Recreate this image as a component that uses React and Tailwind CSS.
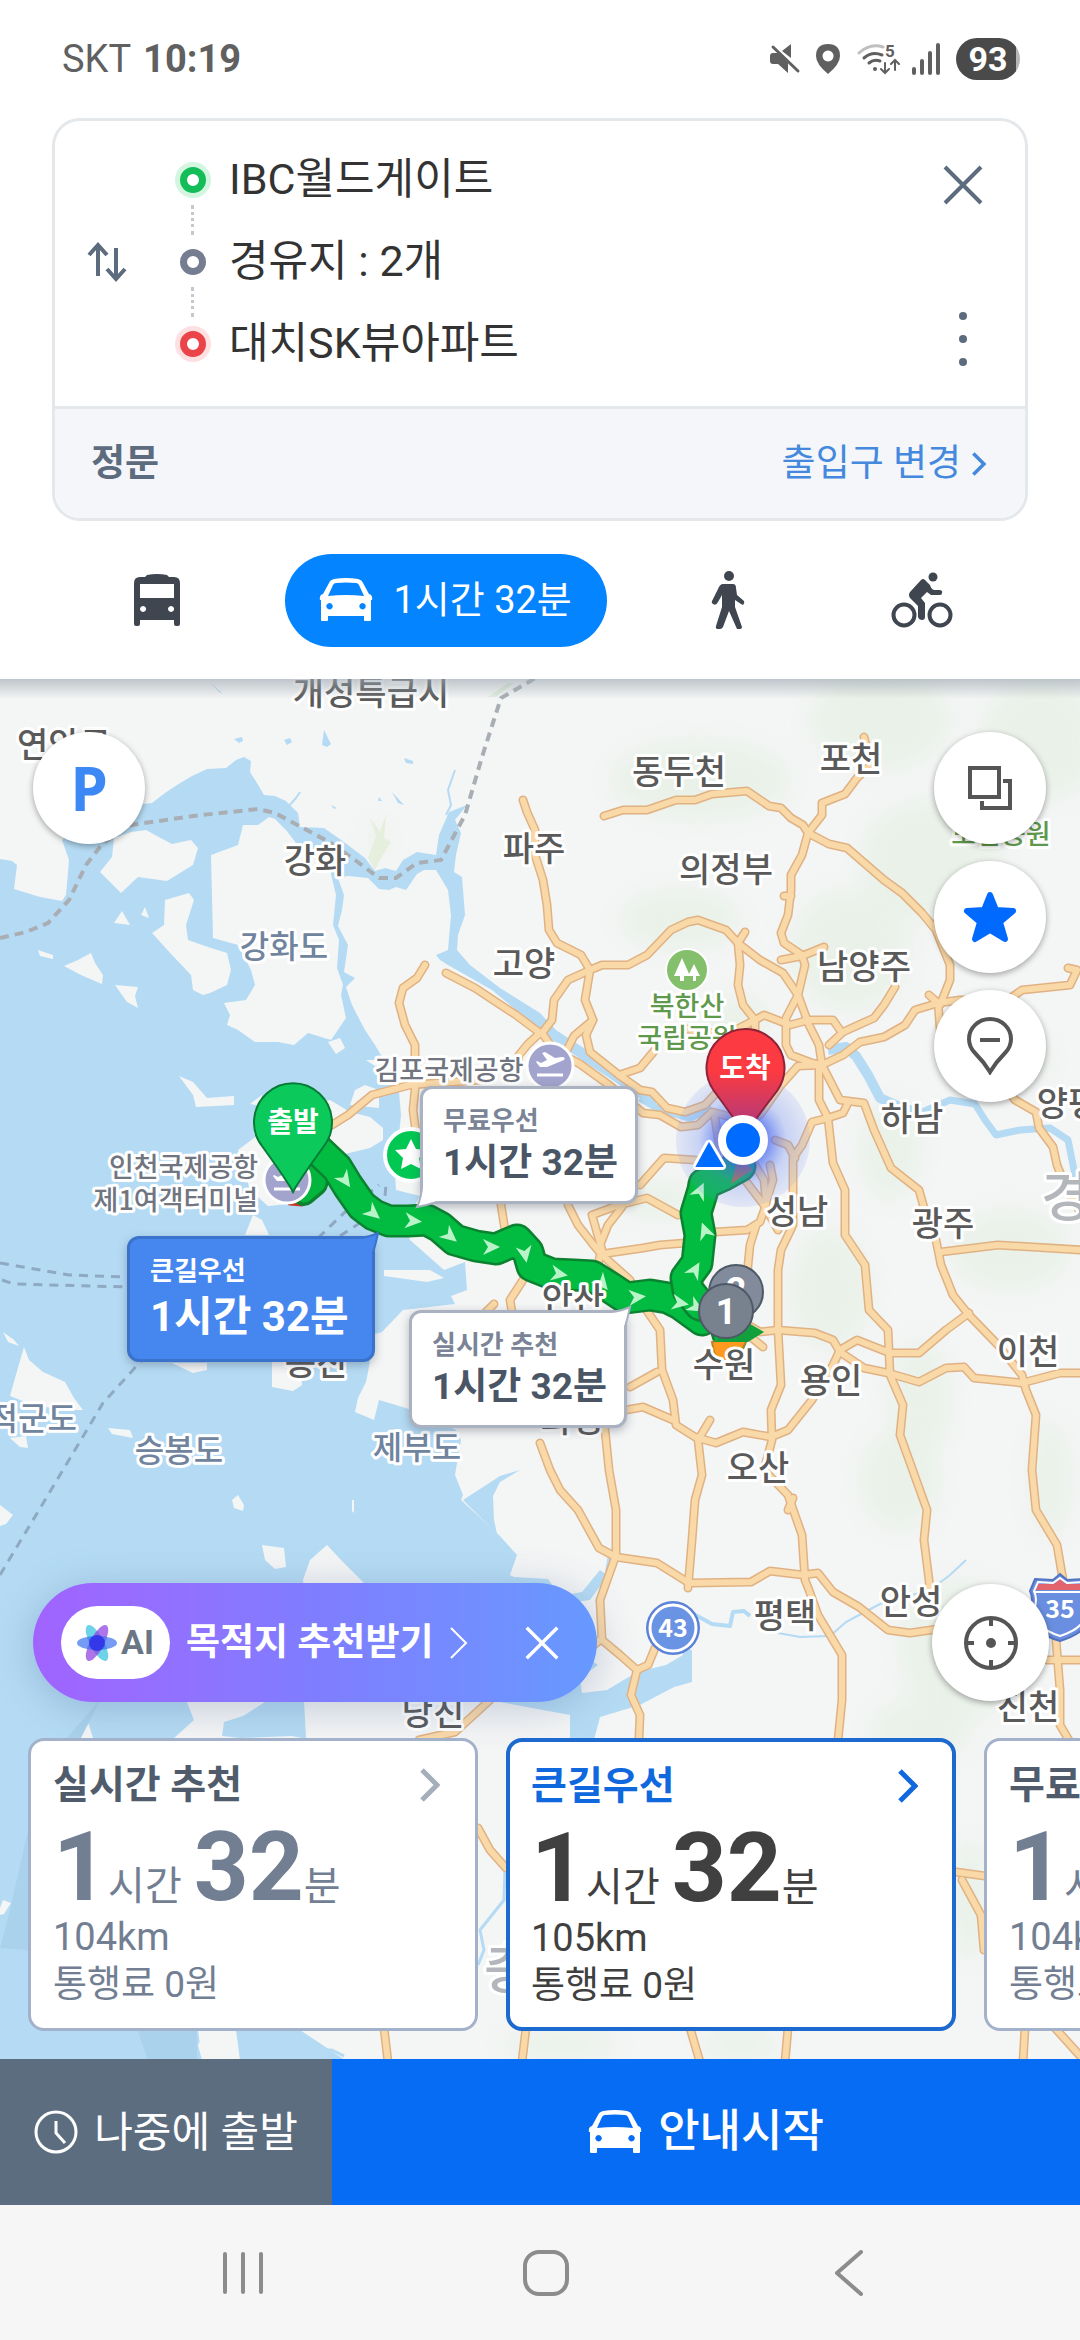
import React from 'react';
import { clsx } from 'clsx';

const WATER = '#b5dbf4';
const LAND = '#f4f5f5';

const sea =
  'M0 859L12 861L17 865L14 889L40 897L62 901L66 895L69 860L62 840L90 810L152 803L165 793L177 785L192 776L207 769L226 768L236 760L244 757L251 761L250 772L257 783L264 795L275 796L286 801L298 813L300 827L324 828L344 842L365 858L375 871L385 868L396 871L403 860L417 852L436 855L439 835L449 812L467 805L455 820L461 833L456 855L454 872L462 877L465 915L458 935L457 950L470 965L500 988L540 1013L556 1030L590 1052L628 1082L657 1098L655 1108L600 1072L552 1040L492 990L448 965L440 960L436 955L448 950L451 915L448 890L436 870L424 870L417 874L406 890L396 887L389 890L379 889L368 878L348 876L338 878L344 895L342 910L338 926L348 945L344 972L355 978L346 987L352 1005L365 1030L375 1045L384 1060L366 1060L384 1072L399 1092L401 1115L399 1135L393 1145L396 1190L420 1196L404 1225L410 1240L444 1270L465 1262L467 1290L451 1296L455 1304L403 1310L382 1332L375 1334L368 1372L366 1382L358 1398L355 1412L374 1420L379 1400L406 1408L456 1430L461 1440L455 1475L463 1495L461 1500L499 1535L517 1555L510 1575L514 1577L548 1579L560 1596L582 1592L600 1570L608 1576L590 1600L560 1604L560 1640L598 1665L580 1678L582 1693L607 1690L637 1672L666 1665L683 1655L683 1648L692 1650L692 1682L674 1687L640 1705L600 1717L594 1740L570 1740L570 1715L500 1702L420 1640L361 1580L341 1560L327 1545L310 1560L303 1580L310 1640L304 1700L306 1738L302 1738L292 1736L240 1738L222 1736L224 1722L243 1716L268 1700L186 1700L194 1720L174 1738L93 1738L86 1715L103 1705L60 1760L40 1900L140 2030L198 2030L202 2060L0 2060Z';

const deepSea = 'M100 1700L65 1740L28 1830L10 1910L0 1948L28 1950L60 1960L138 2032L148 2060L197 2060L197 2032L60 1960L60 1780Z';

const islands = [
  '146,830 155,835 172,844 191,840 198,848 193,865 167,881 138,877 121,893 100,872 112,857 114,838 131,832',
  '243,825 258,825 269,817 275,819 286,830 296,843 310,848 331,860 331,874 336,895 333,925 339,940 337,968 343,985 341,995 346,1018 331,1040 308,1033 294,1045 278,1042 255,1042 238,1030 227,1025 230,1015 224,1003 246,1000 255,985 251,970 238,945 213,938 211,855 238,845',
  '165,900 189,893 194,900 186,925 188,940 205,946 227,953 231,970 227,985 210,993 203,995 193,990 191,975 172,955 152,933 164,925',
  '122,911 130,925 114,923',
  '145,907 149,918 141,915',
  '64,966 78,960 91,953 95,963 103,975 102,984 81,975',
  '115,985 138,987 135,996 138,1008 127,1002',
  '38,950 53,955 53,959 40,956',
  '179,1076 193,1082 207,1098 234,1096 234,1105 196,1107 193,1095',
  '238,1150 258,1135 280,1116 330,1100 350,1112 370,1117 383,1128 383,1140 370,1148 345,1154 330,1170 325,1190 310,1202 268,1206 250,1190',
  '355,1090 365,1085 379,1090 379,1108 350,1105',
  '250,1104 262,1095 262,1106',
  '328,1042 340,1038 345,1048 336,1054',
  '253,1215 262,1220 269,1235 245,1235',
  '384,1270 430,1270 444,1278 427,1282 384,1276',
  '24,1347 29,1360 43,1372 65,1382 74,1398 83,1410 60,1410 28,1403 10,1396 15,1378',
  '3,1332 14,1340 19,1346 8,1342',
  '272,1362 300,1362 302,1385 293,1391 272,1387',
  '172,1363 207,1363 207,1370 193,1373',
  '10,1438 26,1436 28,1448 20,1447',
  '108,1428 130,1430 133,1438 112,1434',
  '232,1500 238,1495 244,1505 243,1511 234,1508',
  '352,1500 354,1500 354,1513 352,1511',
  '262,1545 284,1548 286,1567 275,1569 265,1560',
  '0,1505 13,1515 6,1524 0,1526',
  '229,2032 237,2050 236,2060 202,2060 198,2045 205,2032',
  '3,1900 11,1903 4,1914 0,1915 0,1908',
];

const forests = [
  [700, 780, 90, 40], [880, 720, 70, 50], [1040, 740, 60, 60], [930, 860, 70, 60], [680, 920, 60, 30],
  [850, 950, 60, 60], [1000, 1060, 50, 30], [740, 1020, 30, 25], [660, 1200, 40, 18], [890, 1150, 30, 50],
  [830, 1290, 40, 60], [1010, 1250, 60, 40], [920, 1400, 30, 60], [900, 1480, 40, 50], [960, 1650, 60, 70],
  [920, 1730, 50, 30], [1050, 1480, 20, 60], [265, 905, 20, 8], [270, 1020, 18, 7], [280, 945, 14, 6],
  [375, 840, 10, 14], [200, 955, 14, 6], [560, 2045, 60, 14], [740, 2045, 40, 14], [970, 1900, 20, 60],
];

const roads = [
  '604,816 623,810 647,810 676,800 695,800 712,794 747,791 769,806 781,808 791,818 803,825 808,833 829,844 847,848 884,880 902,893 922,913 936,930 950,965 950,980 940,1005',
  '864,737 871,765 857,778 845,794 822,803 822,815 808,833 802,855 791,875 791,890 788,915 781,933 784,943 802,955 805,965 798,995 786,1018 786,1045 791,1055 812,1063 822,1065',
  '784,896 791,896',
  '781,960 802,956 824,947',
  '590,970 602,965 628,965 647,955 671,930 688,922 698,920 726,930 738,943 740,965 738,985 743,1005 755,1020 755,1045',
  '745,932 738,943 760,960 783,973 798,995 809,1025 819,1045 822,1065 840,1100 864,1103 874,1130 891,1168 919,1190 926,1215 936,1240 941,1265 953,1295 969,1315 998,1345 1022,1375 1026,1390 1036,1415 1032,1470 1036,1510 1057,1545 1063,1580 1056,1640 1060,1690 1060,1725 1070,1742',
  '523,800 527,812 535,830 535,855 543,880 547,905 549,930 557,943 581,955 590,970 585,1000 593,1020 586,1035 590,1052 619,1075 640,1090 652,1092 667,1108 685,1112 705,1105 719,1090 726,1070',
  '590,970 568,980 554,1000 552,1020 542,1033 554,1050 580,1064 609,1085 643,1113 660,1115 681,1127 698,1125 712,1112 735,1118 760,1115 781,1085 798,1066 822,1065',
  '593,1020 574,1036 566,1052',
  '619,1075 640,1068 655,1050',
  '680,1028 726,1035 755,1020 764,1015 790,1025 809,1020 833,1020 840,1030',
  '895,987 884,1005 874,1018 843,1032 829,1045',
  '822,1065 843,1055 860,1042 884,1037 905,1025 915,1010 938,1003 960,1000 1005,1002 1022,990 1070,985 1077,970 1068,968',
  '929,995 938,1003 941,1040 1000,1080 1015,1100 1036,1112 1039,1128 1053,1147 1057,1165 1067,1190 1082,1215',
  '819,1066 819,1100 828,1118 833,1163 845,1190 845,1235 865,1265 869,1310 888,1330 890,1375 903,1405 900,1435 927,1510 924,1540 929,1580 931,1600',
  '848,1103 843,1113 828,1118 812,1122 802,1145 793,1158 793,1225 781,1250 778,1270 778,1330 781,1385 771,1410 772,1440 764,1470 788,1495 802,1535 805,1580 809,1590 818,1615 842,1655 842,1700 838,1740',
  '775,1140 788,1145 795,1158',
  '715,1118 720,1150 745,1180 764,1205 778,1230',
  '752,1160 764,1180 766,1202',
  '770,1165 773,1180 766,1202',
  '715,1232 747,1230 760,1222 766,1205',
  '747,1275 750,1245 756,1226',
  '501,1205 505,1230',
  '523,1280 510,1300 512,1312',
  '494,1304 486,1312',
  '568,1205 578,1225 592,1243 602,1255 630,1280 643,1305 660,1330 662,1370 673,1400 676,1425 695,1437 716,1443 743,1432 771,1437 788,1430 812,1400 833,1365 840,1350 857,1340 890,1353 919,1353 946,1330 969,1313',
  '602,1250 592,1215 619,1205 647,1198 678,1215',
  '600,1245 608,1225 622,1207',
  '602,1254 643,1248 660,1245 685,1243',
  '640,1185 664,1158 695,1160',
  '600,1256 596,1272',
  '748,1325 760,1332 778,1330 815,1333 833,1340 840,1352 864,1368 888,1373 919,1382 946,1368 964,1367 974,1378 1022,1383 1060,1373 1082,1373',
  '752,1338 763,1347',
  '941,1252 998,1245 1082,1250',
  '710,1420 698,1440 702,1475 695,1500 692,1540 688,1588',
  '605,1430 609,1470 616,1510 616,1555 600,1600 602,1640 620,1655 637,1670 631,1695 640,1715 639,1738',
  '637,1670 648,1665 655,1648',
  '540,1443 550,1470 560,1490 578,1510 599,1548 616,1557 657,1563 689,1583 751,1582 770,1571 803,1575 818,1573 833,1592 859,1607 888,1630 910,1633 945,1628',
  '630,1387 657,1372',
  '626,1410 643,1407 673,1420',
  '788,1510 793,1498',
  '425,965 417,978 403,988 399,1003 405,1025 415,1045 415,1090 413,1110 417,1140',
  '446,973 475,988 516,1015 540,1033 528,1044 519,1055 517,1068',
  '332,1125 348,1115 372,1095 410,1085 480,1080',
  '1047,1660 1082,1660',
  '419,1740 455,1732 490,1700',
  '600,1640 594,1645',
  '478,1828 490,1850 506,1868',
  '956,1872 985,1876', '962,1880 981,1915 984,1950',
  '384,2028 388,2062', '526,2028 522,2062', '690,2028 700,2062', '788,2028 785,2062', '1025,2028 1023,2062', '1055,2028 1082,2058',
];

const route =
  'M318 1150L337 1168L348 1186L362 1206L374 1215L389 1221L408 1221L427 1220L440 1227L455 1240L476 1246L496 1249L517 1240L528 1252L532 1266L552 1274L574 1275L592 1276L608 1286L626 1298L650 1295L668 1298L680 1304L702 1320';
const routeEast = 'M730 1340L720 1310L700 1305L688 1290L686 1278L697 1263L700 1235L696 1213L703 1190L704 1184L722 1176L740 1166';

const arrows = [
  [345, 1180, 55], [373, 1213, 40], [413, 1221, 5], [450, 1236, 40], [491, 1247, 0], [525, 1254, 80],
  [559, 1274, 10], [602, 1283, 50], [637, 1297, -5], [680, 1303, 10], [700, 1191, -65], [705, 1231, -110],
  [695, 1270, -60], [696, 1307, 30],
];

const cities = [
  ['개성특급시', 371, 705], ['연안군', 64, 757], ['강화', 315, 873], ['파주', 534, 861], ['고양', 524, 976],
  ['동두천', 679, 784], ['포천', 851, 771], ['의정부', 726, 882], ['남양주', 864, 979], ['하남', 912, 1131],
  ['양평', 1068, 1116], ['성남', 797, 1224], ['광주', 943, 1236], ['이천', 1028, 1364], ['용인', 831, 1393],
  ['수원', 724, 1377], ['오산', 758, 1480], ['평택', 785, 1628], ['안성', 911, 1614], ['진천', 1028, 1719],
  ['당진', 433, 1725], ['안산', 573, 1312], ['옹진', 316, 1375], ['화성', 572, 1432],
];

const isles = [
  ['강화도', 284, 958], ['제부도', 417, 1459], ['승봉도', 179, 1462], ['덕적군도', 18, 1430],
];

function Plane({ x, y }) {
  return (
    <g transform={`translate(${x} ${y})`}>
      <circle r="23" fill="#a3a4cd" stroke="#fff" strokeWidth="3" />
      <path d="M-14 -4l4 5 7 0 17 -7q2 -3 -2 -3l-7 1 -10 -6 -3 1 5 7 -6 3 -4 -2z" fill="#fff" />
      <path d="M-13 9H13" stroke="#fff" strokeWidth="3" />
    </g>
  );
}

function MapCanvas() {
  return (
    <svg
      className="absolute inset-0 h-full w-full"
      viewBox="0 679 1080 1380"
      preserveAspectRatio="xMidYMin slice"
      fontFamily="'Noto Sans CJK KR', sans-serif"
      role="img"
      aria-label="경로 지도"
    >
      <defs>
        <filter id="soft" x="-30%" y="-30%" width="160%" height="160%">
          <feGaussianBlur stdDeviation="12" />
        </filter>
        <radialGradient id="halo">
          <stop offset="0.3" stopColor="#3c5cf0" stopOpacity="0.8" />
          <stop offset="0.65" stopColor="#6080f0" stopOpacity="0.3" />
          <stop offset="1" stopColor="#7090f5" stopOpacity="0.14" />
        </radialGradient>
        <linearGradient id="arrive" x1="0" y1="0" x2="0" y2="1">
          <stop offset="0.4" stopColor="#fb3a41" />
          <stop offset="1" stopColor="#a33a86" />
        </linearGradient>
      </defs>

      <rect y="679" width="1080" height="1380" fill={LAND} />
      <g fill="#dfeedd" opacity="0.5" filter="url(#soft)">
        {forests.map(([x, y, rx, ry]) => (
          <ellipse key={`${x}-${y}`} cx={x} cy={y} rx={rx} ry={ry} />
        ))}
      </g>
      <path d={sea} fill={WATER} />
      <path d={deepSea} fill="#aad2ec" />
      <g fill={LAND}>
        {islands.map((points) => (
          <polygon key={points} points={points} />
        ))}
      </g>

      {/* rivers, ponds and the reclaimed shore */}
      <g fill="none" stroke={WATER} strokeLinejoin="round">
        <path d="M828 1050L846 1047L856 1056L868 1075L880 1098L900 1107L920 1113" strokeWidth="10" />
        <path d="M920 1113L950 1100L975 1104L985 1120L996 1135L1020 1130L1050 1128L1068 1140L1076 1180" strokeWidth="7" />
        <path d="M640 1098L660 1110L690 1118L712 1108" strokeWidth="7" />
        <path d="M455 770L448 790L451 805L446 815" strokeWidth="2" />
        <path d="M288 807L296 798L300 792" strokeWidth="2" />
        <path d="M690 1612L712 1624L730 1626L733 1612L744 1611L750 1616" strokeWidth="4" />
        <path d="M778 1633L800 1637L830 1636L846 1622L880 1604L930 1590L950 1575L966 1560" strokeWidth="2" />
        <path d="M597 1602L606 1578L610 1555" strokeWidth="4" />
        <path d="M505 1868L504 1900L480 1930L484 1950L478 1965" strokeWidth="3" />
        <path d="M318 2058L324 2050L332 2050L344 2056" strokeWidth="3" />
      </g>
      <g fill={WATER}>
        <path d="M234 739l8-2 1 4-4 2zM284 740l6-2 2 4-5 3zM324 730l7 14-4 3-5-2zM404 758l9 3 0 3-7-1zM392 792l12 13-6-2zM331 805l6 3-3 1zM210 682l13 12-4-2zM379 797l3 4-4 0z" />
        <path d="M463 1500L500 1476L520 1470L500 1482L493 1496L494 1520L497 1534z" />
        <path d="M300 2030L345 2060L240 2060L236 2030z" />
      </g>
      <path d="M368 858l8-22-6-18 10 14 6-18-2 24 7 4-10 16-6 12z" fill="#e6efdd" />
      <path d="M488 697l20-14 6 0-18 14z" fill="#dfeeda" />

      <g fill="none" stroke="#a9aeb4" strokeWidth="4" strokeDasharray="9 6">
        <path d="M0 938L26 932L48 923L69 900L86 865L103 843L131 825L193 816L258 809L275 813L303 828L331 843L355 860L379 878L396 878L417 863L441 860L465 815L482 757L501 698L527 683L545 672" />
      </g>
      <g fill="none" stroke="#8fa9c2" strokeWidth="3" strokeDasharray="9 7">
        <path d="M0 1263L69 1275L128 1277" />
        <path d="M2 1280L14 1284L128 1287" />
        <path d="M0 1575L45 1500L103 1403L142 1360" />
        <path d="M318 1238L344 1213L379 1185" />
        <path d="M340 1236L384 1207L386 1185" />
      </g>

      <g fill="none" stroke="#e0b283" strokeWidth="9" strokeLinejoin="round" strokeLinecap="round">
        {roads.map((points) => (
          <polyline key={points} points={points} />
        ))}
      </g>
      <g fill="none" stroke="#fad9a8" strokeWidth="6" strokeLinejoin="round" strokeLinecap="round">
        {roads.map((points) => (
          <polyline key={points} points={points} />
        ))}
      </g>

      {/* route */}
      <g fill="none" strokeLinejoin="round" strokeLinecap="round">
        <path d="M290 1203L302 1204" stroke="#c0392b" strokeWidth="5" />
        <path d="M304 1194L316 1184L320 1164" stroke="#0c8130" strokeWidth="24" />
        <path d="M304 1193L316 1183L320 1164" stroke="#02b53c" strokeWidth="19" />
        <path d={route} stroke="#0c8130" strokeWidth="33" />
        <path d={route} stroke="#02bb41" strokeWidth="28" />
        <path d={routeEast} stroke="#0c8130" strokeWidth="33" />
        <path d={routeEast} stroke="#02bb41" strokeWidth="28" />
      </g>
      <path d="M712 1342L714 1352L722 1366L738 1356L746 1342L750 1334z" fill="#ff9a1f" stroke="#b8842a" strokeWidth="2" />
      <path d="M714 1342L748 1342L764 1332L740 1318z" fill="#12a03d" />
      <path d="M731 1184L752 1170L740 1152z" fill="#b5702f" />
      <g fill="#b9f3c8">
        {arrows.map(([x, y, deg]) => (
          <path key={`${x}-${y}`} transform={`translate(${x} ${y}) rotate(${deg})`} d="M9 0L-8 -8L-3 0L-8 8z" />
        ))}
      </g>

      {/* places */}
      <g stroke="#fff" strokeWidth="6" strokeLinejoin="round" paintOrder="stroke" textAnchor="middle" fontWeight="500">
        <g fontSize="34" fill="#5a5a5a">
          {cities.map(([name, x, y]) => (
            <text key={name} x={x} y={y}>{name}</text>
          ))}
        </g>
        <g fontSize="32" fill="#71849e">
          {isles.map(([name, x, y]) => (
            <text key={name} x={x} y={y}>{name}</text>
          ))}
        </g>
        <g fontSize="27" fill="#70757f">
          <text x="449" y="1080">김포국제공항</text>
          <text x="258" y="1177" textAnchor="end">인천국제공항</text>
          <text x="258" y="1210" textAnchor="end">제1여객터미널</text>
        </g>
        <g fontSize="27" fill="#5f9a4c">
          <text x="687" y="1016">북한산</text>
          <text x="687" y="1048">국립공원</text>
          <text x="1001" y="844">도립공원</text>
        </g>
        <g fontSize="54" fill="#b3b6ba" textAnchor="start">
          <text x="1041" y="1217">경기도</text>
          <text x="484" y="1989">충청남도</text>
        </g>
      </g>

      <g transform="translate(687 970)">
        <circle r="21" fill="#84bf6c" stroke="#fff" strokeWidth="2" />
        <path d="M-5 -12l8 18h-6v5h-4v-5h-6zM7 -6l6 12h-4v5h-3v-5h-5z" fill="#fff" />
      </g>
      <Plane x={550} y={1066} />
      <Plane x={287} y={1180} />

      <g transform="translate(673 1628)">
        <circle r="27" fill="#5b82d8" />
        <circle r="23" fill="#6b93e3" stroke="#fff" strokeWidth="3" />
        <text y="9" textAnchor="middle" fontSize="25" fontWeight="700" fill="#fff">43</text>
      </g>
      <g transform="translate(1060 1605)">
        <path d="M0 -31l7 6 18 -1 5 12q-4 8 0 18 3 22 -30 32 -33 -10 -30 -32 4 -10 0 -18l5 -12 18 1z" fill="#6b8fe0" stroke="#5374c0" strokeWidth="2" />
        <path d="M-24 -15l2 -6 16 0 6 -5 6 5 16 0 2 6z" fill="#e3646c" />
        <path d="M0 -27l7 5 15 -1 4 9q-4 9 0 18 2 18 -26 27 -28 -9 -26 -27 4 -9 0 -18l4 -9 15 1zM-26 -13H26" fill="none" stroke="#fff" strokeWidth="2" />
        <text y="13" textAnchor="middle" fontSize="25" fontWeight="700" fill="#fff">35</text>
      </g>

      <g transform="translate(411 1155)">
        <circle r="26" fill="#00c853" stroke="#fff" strokeWidth="4" />
        <path d="M0 -16l5 10 11 1 -8 8 2 11 -10 -5 -10 5 2 -11 -8 -8 11 -1z" fill="#fff" />
      </g>

      {/* stops */}
      <g fontFamily="Roboto, sans-serif" fontSize="36" fontWeight="700" textAnchor="middle">
        <circle cx="736" cy="1292" r="27" fill="#818b9b" stroke="#4f5866" strokeWidth="2" />
        <text x="736" y="1303" fill="#fff">2</text>
        <circle cx="726" cy="1311" r="27" fill="#78828f" stroke="#4f5866" strokeWidth="2" />
        <text x="726" y="1324" fill="#fff">1</text>
      </g>

      <path d="M293 1192Q288 1182 262 1146A39 39 0 1 1 324 1146Q298 1182 293 1192z" fill="#0cc95b" stroke="#087a36" strokeWidth="2" />
      <circle cx="743" cy="1140" r="67" fill="url(#halo)" />
      <path d="M745 1136Q740 1126 714 1091A39 39 0 1 1 777 1091Q750 1126 745 1136z" fill="url(#arrive)" stroke="#8e2238" strokeWidth="2" />
      <path d="M709 1144L697 1166H722z" fill="#fff" stroke="#fff" strokeWidth="8" strokeLinejoin="round" />
      <path d="M709 1144L697 1166H722z" fill="#006cff" stroke="#006cff" strokeWidth="2" />
      <circle cx="743" cy="1140" r="21" fill="#006cff" stroke="#fff" strokeWidth="8" />
      <g fill="#fff" fontSize="28" fontWeight="700" textAnchor="middle">
        <text x="293" y="1132">출발</text>
        <text x="745" y="1078">도착</text>
      </g>
    </svg>
  );
}

function CarIcon({ className }) {
  return (
    <svg className={className} viewBox="0 0 54 44" fill="currentColor" aria-hidden="true">
      <path
        fillRule="evenodd"
        d="M15 1Q27 -1 39 1Q43 2 44 5L50 16Q54 17 53 22H52V42Q52 43 51 43H46Q45 43 45 42V38H9V42Q9 43 8 43H3Q2 43 2 42V22H1Q0 17 4 16L10 5Q11 2 15 1ZM14 7L9 18Q27 16 45 18L40 7Q39 5 37 5Q27 4 17 5Q15 5 14 7ZM10.500 25A3.200 3.200 0 1 0 10.600 25ZM43.500 25A3.200 3.200 0 1 0 43.600 25Z"
      />
    </svg>
  );
}

function BusIcon() {
  return (
    <svg className="h-[52px] w-[46px]" viewBox="0 0 46 52" fill="currentColor" aria-hidden="true">
      <path
        fillRule="evenodd"
        d="M13 1Q23 -1 33 1L35 3H40Q46 3 46 9V50Q46 52 44 52H42Q40 52 40 50V46H6V50Q6 52 4 52H2Q0 52 0 50V9Q0 3 6 3H11ZM6 10V24H40V10ZM9 32A3 3 0 1 0 9.100 32ZM37 32A3 3 0 1 0 37.100 32Z"
      />
    </svg>
  );
}

function WalkIcon() {
  return (
    <svg className="h-[58px] w-[34px]" viewBox="0 0 34 58" fill="currentColor" aria-hidden="true">
      <circle cx="18" cy="5" r="5" />
      <path d="M12 13H22Q25 13 25 17L26 24L33 30Q34 32 32 34L30 33L24 29V36L31 56Q31 58 28 58H26L18 40L12 56Q11 58 9 58H6Q4 57 5 55L11 36V24L7 31Q5 35 2 33Q0 32 1 30L7 18Q9 13 12 13Z" />
    </svg>
  );
}

function BikeIcon() {
  return (
    <svg className="h-[56px] w-[64px]" viewBox="0 0 64 56" aria-hidden="true">
      <g fill="none" stroke="currentColor" strokeWidth="4">
        <circle cx="14" cy="43" r="10.500" />
        <circle cx="50" cy="43" r="10.500" />
      </g>
      <circle cx="43" cy="5" r="4.500" fill="currentColor" />
      <path
        d="M31 8Q33 6 35 8L40 13Q41 17 44 18H50Q53 19 52 21Q52 23 50 23H41L37 20L31 26L35 31V45Q35 48 32 48Q29 48 28 45V34L20 26Q18 23 20 20Z"
        fill="currentColor"
      />
    </svg>
  );
}

function Chevron({ className, width = 4 }) {
  return (
    <svg className={className} viewBox="0 0 20 34" fill="none" stroke="currentColor" strokeWidth={width} aria-hidden="true">
      <path d="M2 2L17 17L2 32" />
    </svg>
  );
}

function Cross({ className, width }) {
  return (
    <svg className={className} viewBox="0 0 40 40" fill="none" stroke="currentColor" strokeWidth={width} aria-hidden="true">
      <path d="M2 2L38 38M38 2L2 38" />
    </svg>
  );
}

function StatusBar() {
  return (
    <div className="flex h-[118px] items-center justify-between pr-[60px] pl-[62px] text-[#606060]">
      <div className="flex items-center gap-3 text-[38px]">
        <span>SKT</span>
        <span className="font-bold">10:19</span>
      </div>
      <div className="flex items-center gap-4">
        <svg className="h-8 w-[130px]" viewBox="0 0 130 32" aria-hidden="true">
          <g fill="currentColor">
            <path d="M0 13Q0 10 3 10H8L18 20V30L8 21H3Q0 21 0 18ZM12 8L21 1V15Z" />
            <path fillRule="evenodd" d="M58 1Q70 1 70 13Q70 21 58 31Q46 21 46 13Q46 1 58 1ZM58 7.500A5.500 5.500 0 1 0 58.100 7.500Z" />
          </g>
          <g fill="none" stroke="currentColor" strokeWidth="3" strokeLinecap="round">
            <path d="M3 4L28 28" />
            <path d="M89 10Q100 0 113 4" opacity="0.4" />
            <path d="M94 15Q102 8 112 12" />
            <path d="M99 20Q104 16 110 18" />
            <path d="M115 20V30M111 26L115 30L119 26M125 27V17M121 21L125 17L129 21" strokeWidth="2" />
          </g>
          <circle cx="105" cy="26" r="2" fill="currentColor" />
          <text x="115" y="14" fontSize="17" fontWeight="700" fill="currentColor">5</text>
        </svg>
        <div className="-ml-1 flex h-8 items-end gap-1">
          <i className="h-2 w-1 rounded bg-[#606060]" />
          <i className="h-4 w-1 rounded bg-[#606060]" />
          <i className="h-6 w-1 rounded bg-[#606060]" />
          <i className="h-8 w-1 rounded bg-[#606060]" />
        </div>
        <div className="flex h-[42px] w-16 items-center justify-center rounded-full bg-[linear-gradient(90deg,#4a4a4a_93%,#b5b5b5_93%)] text-[34px] font-bold text-white">
          93
        </div>
      </div>
    </div>
  );
}

const stops = [
  { name: 'IBC월드게이트', ring: 'border-[#14bd57]', glow: 'bg-[#d4f5e0]' },
  { name: '경유지 : 2개', ring: 'border-[#747e90]', glow: 'bg-white' },
  { name: '대치SK뷰아파트', ring: 'border-[#ea4348]', glow: 'bg-[#fde0e1]' },
];

function RouteCard() {
  return (
    <section className="mx-[52px] overflow-hidden rounded-[28px] border-[3px] border-[#e5e8eb]">
      <div className="flex h-[285px] items-stretch justify-between pr-[42px] pl-8">
        <div className="flex items-center pb-1">
          <button aria-label="출발지와 도착지 바꾸기" className="text-[#5d6b7e]">
            <svg className="h-10 w-10" viewBox="0 0 40 40" fill="none" stroke="currentColor" strokeWidth="4">
              <path d="M11 34V3M2 13L11 3L20 13M29 6V37M20 27L29 37L38 27" />
            </svg>
          </button>
          <ul className="ml-12 flex flex-col">
            {stops.map((stop, i) => (
              <li key={stop.name} className="relative flex h-[82px] items-center gap-[18px] text-[43px] text-[#333]">
                <span className={clsx('flex size-9 items-center justify-center rounded-full', stop.glow)}>
                  <span className={clsx('size-[26px] rounded-full border-[7px] bg-white', stop.ring)} />
                </span>
                {stop.name}
                {i < 2 && (
                  <span className="absolute top-[66px] left-4 h-[30px] border-l-[3px] border-dotted border-[#c4c9d0]" />
                )}
              </li>
            ))}
          </ul>
        </div>
        <div className="flex flex-col items-center justify-between pt-11 pb-9">
          <button aria-label="닫기" className="text-[#5d6b7e]">
            <Cross className="h-10 w-10" width={4} />
          </button>
          <button aria-label="더보기" className="flex flex-col gap-[15px] p-1">
            <i className="size-2 rounded-full bg-[#5d6b7e]" />
            <i className="size-2 rounded-full bg-[#5d6b7e]" />
            <i className="size-2 rounded-full bg-[#5d6b7e]" />
          </button>
        </div>
      </div>
      <div className="flex h-[112px] items-center justify-between border-t-[3px] border-[#e5e8eb] bg-[#f4f6fa] pr-[38px] pl-9 text-[37px]">
        <strong className="text-[#5d6b7e]">정문</strong>
        <a href="#entrance" className="flex items-center gap-2.5 text-[#4489dd]">
          출입구 변경
          <Chevron className="h-6 w-4" width={5} />
        </a>
      </div>
    </section>
  );
}

function ModeTabs() {
  return (
    <nav className="flex h-[158px] items-center justify-between pr-[126px] pl-[134px] text-[#3f4650]">
      <button aria-label="버스"><BusIcon /></button>
      <button className="flex h-[93px] w-[322px] items-center justify-center gap-5 rounded-full bg-[#0485ff] text-[38px] text-white">
        <CarIcon className="h-11 w-[54px]" />
        1시간 32분
      </button>
      <button aria-label="도보"><WalkIcon /></button>
      <button aria-label="자전거" className="ml-10"><BikeIcon /></button>
    </nav>
  );
}

function RoundButton({ label, children }) {
  return (
    <button
      aria-label={label}
      className="flex size-28 items-center justify-center rounded-full bg-white text-[#555] shadow-[0_2px_6px_rgba(0,0,0,0.35)]"
    >
      {children}
    </button>
  );
}

function MapControls() {
  return (
    <div className="absolute top-[53px] right-[34px] flex flex-col gap-[17px]">
      <RoundButton label="지도 레이어">
        <svg className="h-11 w-11" viewBox="0 0 44 44" fill="none" stroke="currentColor" strokeWidth="4">
          <path d="M2 2H31V31H2ZM35 15H42V42H14V35" />
        </svg>
      </RoundButton>
      <RoundButton label="즐겨찾기">
        <svg className="h-[52px] w-14 text-[#006aff]" viewBox="0 0 56 52" fill="currentColor" stroke="currentColor" strokeWidth="6" strokeLinejoin="round">
          <path d="M28 4L34 19L51 20L38 31L43 48L28 39L13 48L18 31L5 20L22 19Z" />
        </svg>
      </RoundButton>
      <RoundButton label="핀 숨기기">
        <svg className="h-[58px] w-[46px]" viewBox="0 0 46 58" fill="none" stroke="currentColor" strokeWidth="4">
          <path d="M23 55Q17 45 8 36Q2 30 2 22A21 20 0 0 1 44 22Q44 30 38 36Q29 45 23 55ZM13 23H33" />
        </svg>
      </RoundButton>
    </div>
  );
}

function Callout({ title, time, active, tail, className }) {
  return (
    <button
      className={clsx(
        'absolute flex flex-col items-start justify-center rounded-xl border-[3px] pl-5 text-left shadow-[0_3px_10px_rgba(60,70,90,0.35)]',
        active ? 'border-[#3a72cc] bg-[#4687ef] text-white' : 'border-[#aab1c0] bg-white text-[#4a5666]',
        className,
      )}
    >
      {tail === 'right' ? (
        <svg className="absolute -top-2 -right-2 h-6 w-6" viewBox="0 0 24 24" fill={active ? '#4687ef' : '#fff'}>
          <path d="M2 8Q14 6 22 2Q20 12 16 22L4 20Z" />
          <path d="M2 7Q14 6 22 2Q20 12 17 22" fill="none" stroke={active ? '#3a72cc' : '#aab1c0'} strokeWidth="2" />
        </svg>
      ) : (
        <svg className="absolute -bottom-2 -left-2 h-6 w-6" viewBox="0 0 24 24" fill="#fff">
          <path d="M8 2Q6 14 2 22Q12 20 22 16L20 4Z" />
          <path d="M7 2Q6 14 2 22Q12 20 22 17" fill="none" stroke="#aab1c0" strokeWidth="2" />
        </svg>
      )}
      <span className={clsx('text-[26px] leading-9 font-bold', !active && 'text-[#7a8496]')}>{title}</span>
      <span className={clsx('font-bold', active ? 'text-[42px] leading-[56px]' : 'text-[37px] leading-[48px]')}>{time}</span>
    </button>
  );
}

function AiBanner() {
  return (
    <div className="flex h-[119px] items-center rounded-full bg-linear-to-r from-[#a163ff] via-[#7f7dff] to-[#6699ff] pr-[38px] pl-7 text-white shadow-[0_6px_40px_rgba(70,100,150,0.3)]">
      <span className="flex h-[73px] w-[109px] items-center justify-center gap-1 rounded-full bg-white text-[34px] font-bold text-[#6b7684]">
        <svg className="h-10 w-10" viewBox="-20 -20 40 40" aria-hidden="true">
          <ellipse rx="7" ry="20" fill="#3ec3e0" opacity="0.75" transform="rotate(-28)" />
          <ellipse rx="7" ry="20" fill="#8a3be0" opacity="0.7" transform="rotate(28)" />
          <ellipse rx="20" ry="7" fill="#3a70f0" opacity="0.7" />
          <circle r="8" fill="#2a28e8" opacity="0.75" />
        </svg>
        AI
      </span>
      <a href="#recommend" className="ml-4 flex items-center gap-4 text-[37px] font-bold">
        목적지 추천받기
        <Chevron className="h-9 w-5" width={2} />
      </a>
      <button aria-label="추천 닫기" className="ml-14">
        <Cross className="h-[34px] w-[34px]" width={4} />
      </button>
    </div>
  );
}

const options = [
  { name: '실시간 추천', distance: '104km' },
  { name: '큰길우선', distance: '105km', active: true },
  { name: '무료우선', distance: '104km' },
];

function OptionCard({ name, distance, active }) {
  return (
    <button
      className={clsx(
        'flex h-[293px] w-[450px] shrink-0 flex-col rounded-2xl bg-white pt-4 text-left',
        active ? 'border-4 border-[#1c69cf] pr-[34px] pl-[21px] text-[#404040]' : 'border-[3px] border-[#a3b1cb] pr-[35px] pl-[22px] text-[#727e92]',
      )}
    >
      <span
        className={clsx(
          'flex w-full items-center justify-between text-[39px] leading-[56px] font-bold',
          active ? 'text-[#0f68dd]' : 'text-[#505c6b]',
        )}
      >
        {name}
        <Chevron className={clsx('h-[34px] w-5', !active && 'text-[#a5afbc]')} width={5} />
      </span>
      <span className="mt-2 flex items-baseline text-[40px] leading-[48px]">
        <b className="text-8xl leading-[92px]">1</b>
        시간
        <b className="ml-3 text-8xl leading-[92px]">32</b>
        분
      </span>
      <span className="text-[38px] leading-[48px]">{distance}</span>
      <span className="text-[37px] leading-[48px]">통행료 0원</span>
    </button>
  );
}

export default function App() {
  return (
    <div className="flex min-h-screen flex-col overflow-hidden bg-white font-[family-name:Roboto,'Noto_Sans_CJK_KR',sans-serif]">
      <header className="bg-white">
        <StatusBar />
        <RouteCard />
        <ModeTabs />
      </header>

      <main className="relative flex-1 overflow-hidden">
        <MapCanvas />
        <div className="absolute inset-x-0 top-0 h-5 bg-linear-to-b from-[#9aa5ae]/60 to-transparent" />

        <div className="absolute top-[53px] left-[33px]">
          <RoundButton label="주차장">
            <span className="font-[family-name:'Open_Sans',sans-serif] text-[60px] leading-none font-bold text-[#3c89f5]">P</span>
          </RoundButton>
        </div>
        <MapControls />

        <Callout title="무료우선" time="1시간 32분" tail="left" className="top-[407px] left-[420px] h-[118px] w-[218px]" />
        <Callout title="큰길우선" time="1시간 32분" tail="right" active className="top-[557px] left-[127px] h-[126px] w-[248px]" />
        <Callout title="실시간 추천" time="1시간 32분" tail="right" className="top-[631px] left-[409px] h-[118px] w-[218px]" />

        <div className="absolute inset-x-0 bottom-7 flex flex-col gap-9">
          <div className="flex items-center justify-between pr-[31px] pl-[33px]">
            <AiBanner />
            <button
              aria-label="현재 위치"
              className="flex size-[117px] items-center justify-center rounded-full bg-white text-[#555] shadow-[0_2px_6px_rgba(0,0,0,0.35)]"
            >
              <svg className="h-14 w-14" viewBox="0 0 56 56" fill="none" stroke="currentColor" strokeWidth="4">
                <circle cx="28" cy="28" r="25" />
                <path d="M28 3V11M28 45V53M3 28H11M45 28H53" />
                <circle cx="28" cy="28" r="3" fill="currentColor" />
              </svg>
            </button>
          </div>
          <div className="flex gap-7 overflow-hidden pl-7">
            {options.map((option) => (
              <OptionCard key={option.name} {...option} />
            ))}
          </div>
        </div>
      </main>

      <footer>
        <div className="flex h-[146px] text-white">
          <button className="flex w-[332px] items-center justify-center gap-4 bg-[#5d6d80] text-[42px]">
            <svg className="h-11 w-11" viewBox="0 0 44 44" fill="none" stroke="currentColor" strokeWidth="3" aria-hidden="true">
              <circle cx="22" cy="22" r="20" />
              <path d="M22 11V23L31 33" />
            </svg>
            나중에 출발
          </button>
          <button className="flex flex-1 items-center justify-center gap-4 bg-[#056cf3] text-[45px] font-medium">
            <CarIcon className="h-11 w-[54px]" />
            안내시작
          </button>
        </div>
        <nav className="grid h-[135px] grid-cols-3 items-center justify-items-center bg-[#f6f6f6] pr-20 pl-[92px] text-[#8c8c8c]">
          <button aria-label="최근 앱" className="flex gap-3.5">
            <i className="h-[42px] w-1 rounded bg-[#8c8c8c]" />
            <i className="h-[42px] w-1 rounded bg-[#8c8c8c]" />
            <i className="h-[42px] w-1 rounded bg-[#8c8c8c]" />
          </button>
          <button aria-label="홈" className="size-[46px] rounded-[16px] border-4 border-[#8c8c8c]" />
          <button aria-label="뒤로">
            <svg className="h-[46px] w-7" viewBox="0 0 28 46" fill="none" stroke="currentColor" strokeWidth="4" strokeLinecap="round" strokeLinejoin="round">
              <path d="M26 2L2 23L26 44" />
            </svg>
          </button>
        </nav>
      </footer>
    </div>
  );
}
